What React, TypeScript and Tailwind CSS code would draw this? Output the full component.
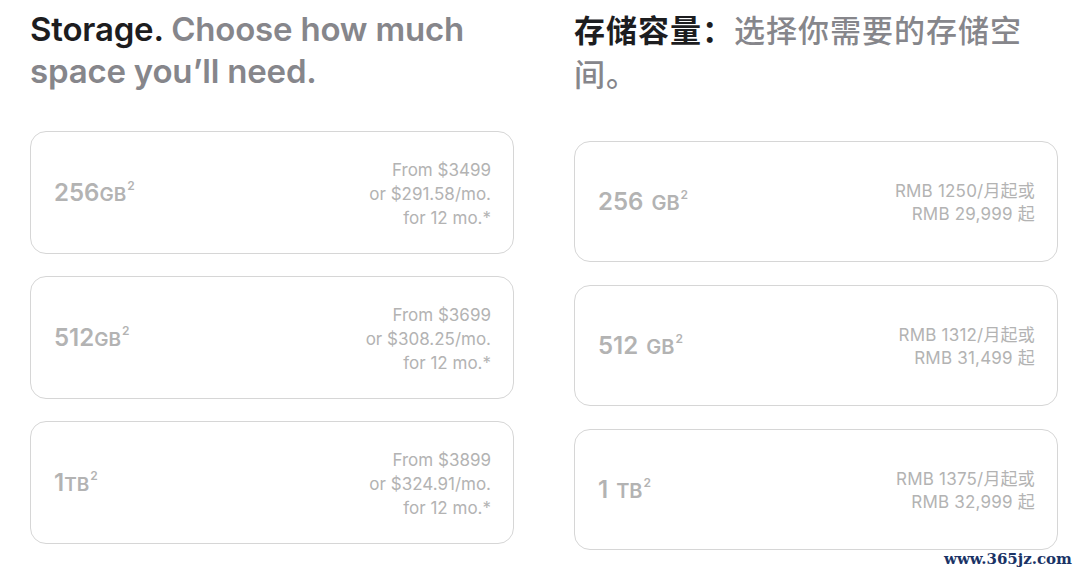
import React from "react";

const sans = "font-['Inter','Noto_Sans_CJK_SC',sans-serif]";

const enOptions = [
  { size: "256", unit: "GB", price: "From $3499", monthly: "or $291.58/mo." },
  { size: "512", unit: "GB", price: "From $3699", monthly: "or $308.25/mo." },
  { size: "1", unit: "TB", price: "From $3899", monthly: "or $324.91/mo." },
];

const cnOptions = [
  { size: "256", unit: "GB", monthly: "RMB 1250/月起或", total: "RMB 29,999 起" },
  { size: "512", unit: "GB", monthly: "RMB 1312/月起或", total: "RMB 31,499 起" },
  { size: "1", unit: "TB", monthly: "RMB 1375/月起或", total: "RMB 32,999 起" },
];

const App = () => {
  return (
    <div className={`relative w-[1080px] h-[575px] bg-white overflow-hidden ${sans}`}>
      <div className="flex gap-[60px] pl-[30px]">
        {/* ENGLISH */}
        <div className="w-[484px] pt-[8px]">
          <h2 className="text-[33px] leading-[42px] font-semibold tracking-[-0.2px] text-[#86868b]">
            <span className="text-[#1d1d1f]">Storage.</span> Choose how much
            <br />
            space you’ll need.
          </h2>

          <div className="mt-[39px] flex flex-col gap-[22px]">
            {enOptions.map((o) => (
              <div
                key={o.size}
                className="h-[123px] rounded-[16px] border border-[#d6d6d6] flex items-center justify-between pl-[23px] pr-[22px]"
              >
                <span className="text-[#b3b3b3] font-semibold">
                  <span className="text-[24px]">{o.size}</span>
                  <span className="text-[19px]">{o.unit}</span>
                  <sup className="text-[12px] align-[5px] ml-[1px]">2</sup>
                </span>
                <div className="text-right text-[17px] leading-[24px] pt-[3px] text-[#b3b3b3]">
                  <div>{o.price}</div>
                  <div>{o.monthly}</div>
                  <div>for 12 mo.*</div>
                </div>
              </div>
            ))}
          </div>
        </div>

        {/* CHINESE */}
        <div className="w-[484px] pt-[9px]">
          <h2 className="text-[31px] leading-[44px] font-medium text-[#86868b] tracking-[1px]">
            <span className="text-[#1d1d1f] font-bold">存储容量：</span>选择你需要的存储空
            <br />
            间。
          </h2>

          <div className="mt-[44px] flex flex-col gap-[23px]">
            {cnOptions.map((o) => (
              <div
                key={o.size}
                className="h-[121px] rounded-[16px] border border-[#d6d6d6] flex items-center justify-between pl-[23px] pr-[22px]"
              >
                <span className="text-[#b3b3b3] font-semibold">
                  <span className="text-[24px]">{o.size}</span>
                  <span className="text-[20px] ml-[8px]">{o.unit}</span>
                  <sup className="text-[12px] align-[5px] ml-[1px]">2</sup>
                </span>
                <div className="text-right text-[17px] leading-[23px] pt-[2px] text-[#b3b3b3] tracking-[0.2px]">
                  <div>{o.monthly}</div>
                  <div>{o.total}</div>
                </div>
              </div>
            ))}
          </div>
        </div>
      </div>

      {/* watermark */}
      <span className="absolute right-[8px] bottom-[5px] text-[15px] font-bold text-[#1a3366] font-['DejaVu_Serif',serif]">
        www.365jz.com
      </span>
    </div>
  );
};

export default App;
